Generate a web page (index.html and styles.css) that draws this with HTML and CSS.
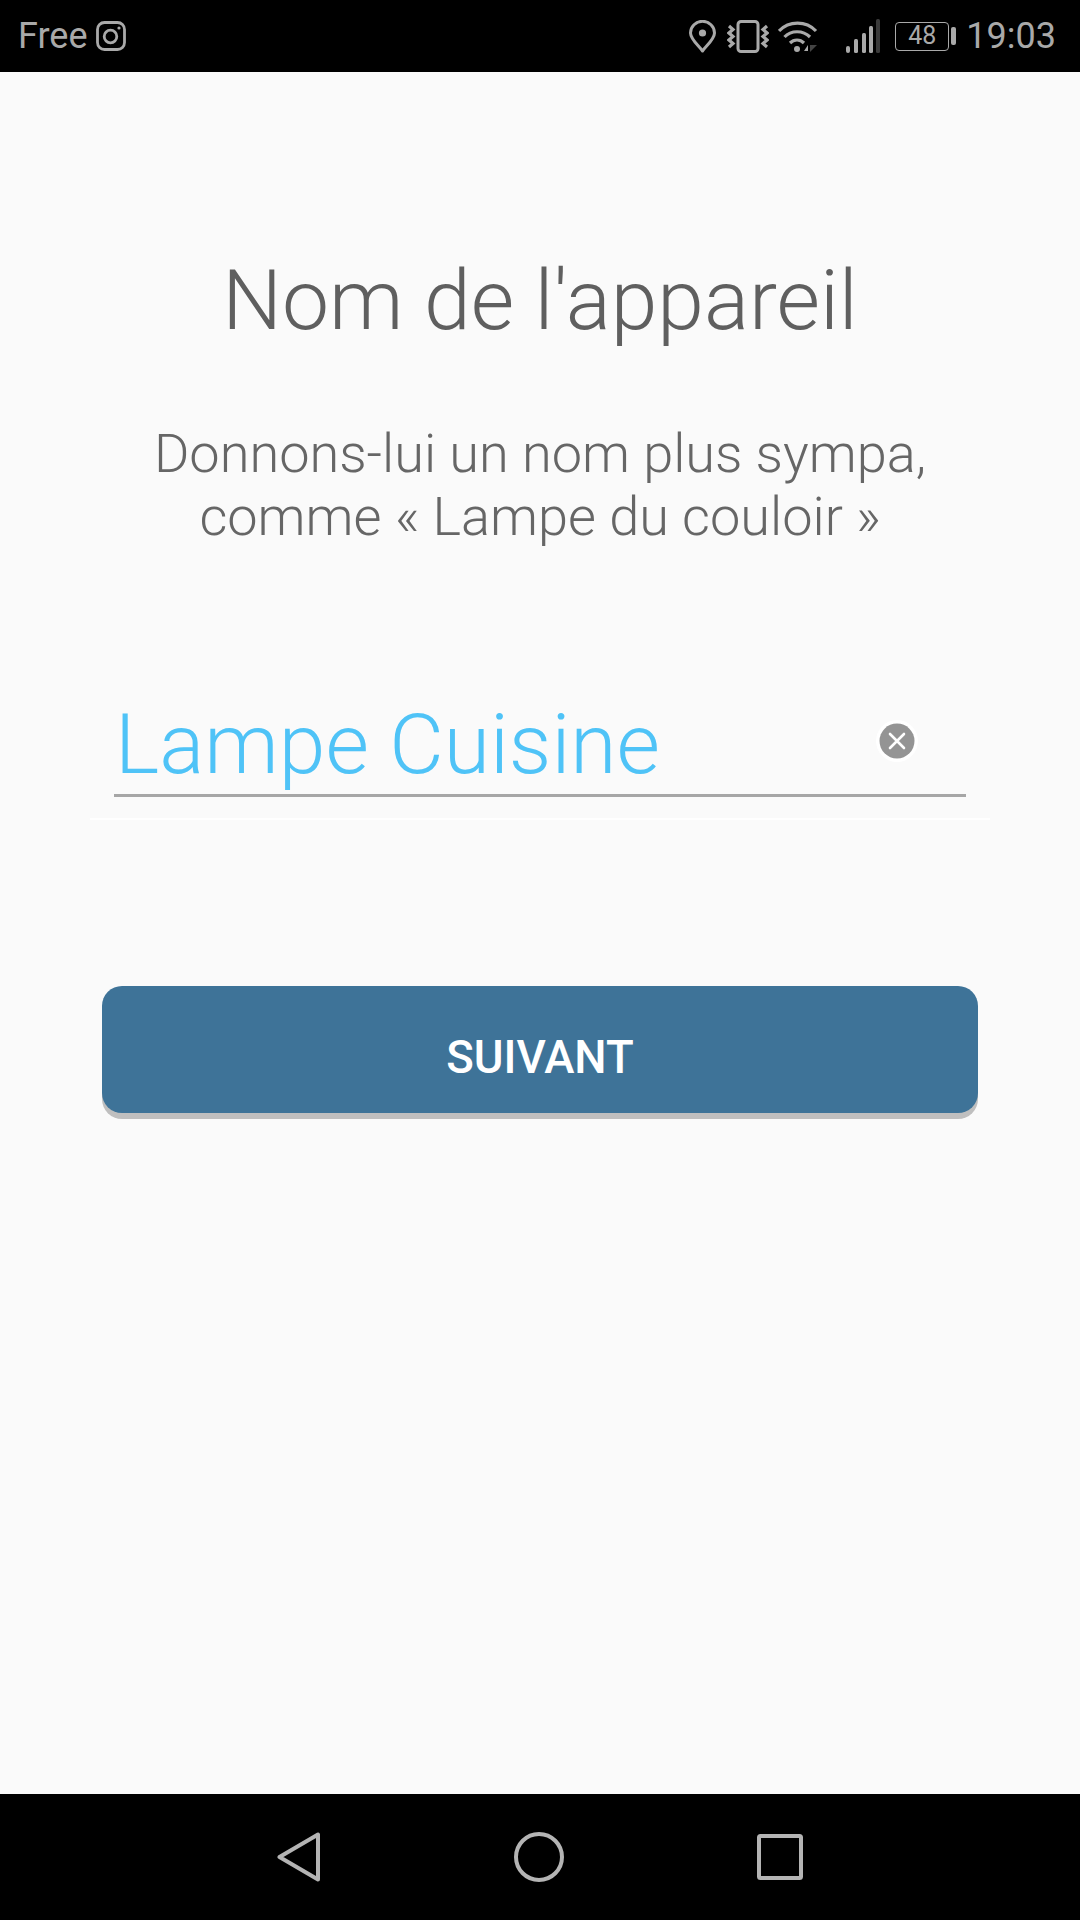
FILE: index.html
```html
<!DOCTYPE html>
<html lang="fr">
<head>
  <meta charset="UTF-8" />
  <meta name="viewport" content="width=device-width, initial-scale=1.0"/>
  <title>Nom de l'appareil</title>
  <link rel="stylesheet" href="styles.css">
</head>
<body>
  <div class="status-bar">
    <div class="status-left">
      <span>Free</span>
      <svg class="icon-insta" viewBox="0 0 30 30" fill="none" stroke="#a9a9a9" stroke-width="2.8">
        <rect x="1.5" y="1.5" width="27" height="27" rx="7"/>
        <circle cx="14.5" cy="15.5" r="6.3"/>
        <circle cx="23" cy="7" r="1.6" fill="#a9a9a9" stroke="none"/>
      </svg>
    </div>
    <div class="status-right">
      <svg class="icon-pin" viewBox="0 0 27 33" fill="none" stroke="#a9a9a9" stroke-width="3">
        <path d="M13.5 31 C9 25 1.5 19 1.5 13 A12 11.7 0 0 1 25.5 13 C25.5 19 18 25 13.5 31 Z" stroke-linejoin="round"/>
        <circle cx="13.5" cy="13" r="3.6" fill="#a9a9a9" stroke="none"/>
      </svg>
      <svg class="icon-vibrate" viewBox="0 0 42 33" fill="none" stroke="#a9a9a9">
        <rect x="11" y="1.5" width="20" height="30" rx="3" stroke-width="3"/>
        <path d="M2 6 L6 9.5 L2 13 L6 16.5 L2 20 L6 23.5 L2 27" stroke-width="3.2"/>
        <path d="M40 6 L36 9.5 L40 13 L36 16.5 L40 20 L36 23.5 L40 27" stroke-width="3.2"/>
      </svg>
      <svg class="icon-wifi" viewBox="0 0 40 33" fill="none" stroke="#a9a9a9" stroke-width="3.2">
        <path d="M1 11 C11 0.5 28 0.5 38 11"/>
        <path d="M6.5 17 C13 10 25 10 32 17"/>
        <path d="M12 23 C16 19 22 19 26 23"/>
        <circle cx="19" cy="29" r="3" fill="#a9a9a9" stroke="none"/>
        <path d="M30 31 H26 L30 25 Z" fill="#a9a9a9" stroke="none"/>
        <path d="M32 32 V25 L39 25 L32 32 Z" fill="#444" stroke="none"/>
      </svg>
      <svg class="icon-signal" viewBox="0 0 34 34">
        <rect x="0" y="27" width="4" height="7" rx="2" fill="#a9a9a9"/>
        <rect x="8" y="20" width="4" height="14" rx="1.5" fill="#a9a9a9"/>
        <rect x="16" y="14" width="4" height="20" rx="1.5" fill="#a9a9a9"/>
        <rect x="23" y="7" width="4" height="27" rx="1.5" fill="#a9a9a9"/>
        <rect x="30" y="0" width="4" height="34" rx="1.5" fill="#3a3a3a"/>
      </svg>
      <div class="battery">
        <div class="battery-body">48</div>
        <div class="battery-cap"></div>
      </div>
      <span class="clock">19:03</span>
    </div>
  </div>

  <div class="content">
    <h1 class="title">Nom de l'appareil</h1>
    <p class="subtitle">Donnons-lui un nom plus sympa,<br>comme « Lampe du couloir »</p>

    <div class="field">
      <div class="field-row">
        <span class="field-value">Lampe Cuisine</span>
        <svg class="icon-clear" viewBox="0 0 42 42">
          <circle cx="21" cy="21" r="21" fill="#fff"/>
          <circle cx="21" cy="21" r="17.5" fill="#949494"/>
          <path d="M14 14 L28 28 M28 14 L14 28" stroke="#fff" stroke-width="2.6" stroke-linecap="round"/>
        </svg>
      </div>
    </div>

    <button class="next-btn">SUIVANT</button>
  </div>

  <div class="nav-bar">
    <svg class="nav-back" viewBox="0 0 44 50" fill="none" stroke="#b4b4b4" stroke-width="4" stroke-linejoin="round">
      <path d="M41 2.5 V47.5 L2.5 25 Z"/>
    </svg>
    <svg class="nav-home" viewBox="0 0 50 50" fill="none" stroke="#b4b4b4" stroke-width="4">
      <circle cx="25" cy="25" r="23"/>
    </svg>
    <svg class="nav-recent" viewBox="0 0 46 46" fill="none" stroke="#b4b4b4" stroke-width="4" stroke-linejoin="round">
      <rect x="2" y="2" width="42" height="42" rx="1.5"/>
    </svg>
  </div>
</body>
</html>
```

FILE: styles.css
```css
* {
  box-sizing: border-box;
}

body {
  margin: 0;
  width: 1080px;
  height: 1920px;
  display: flex;
  flex-direction: column;
  background: #fafafa;
  font-family: Roboto, sans-serif;
}

/* status bar */
.status-bar {
  height: 72px;
  padding: 0 24px 0 18px;
  background: #000;
  color: #a9a9a9;
  font-size: 36px;
  display: flex;
  justify-content: space-between;
  align-items: center;
}

.status-left,
.status-right {
  display: flex;
  align-items: center;
}

.status-left {
  gap: 8px;
}

.icon-insta {
  width: 30px;
  height: 30px;
}

.icon-pin {
  width: 27px;
  height: 33px;
}

.icon-vibrate {
  width: 42px;
  height: 33px;
  margin-left: 11px;
}

.icon-wifi {
  width: 40px;
  height: 33px;
  margin-left: 9px;
}

.icon-signal {
  width: 34px;
  height: 34px;
  margin-left: 28px;
}

.battery {
  display: flex;
  align-items: center;
  gap: 2px;
  margin-left: 15px;
}

.battery-body {
  width: 54px;
  height: 29px;
  border: 1.5px solid #a9a9a9;
  border-radius: 4px;
  font-size: 25px;
  line-height: 26px;
  text-align: center;
}

.battery-cap {
  width: 5px;
  height: 18px;
  border-radius: 2px;
  background: #a9a9a9;
}

.clock {
  margin-left: 10px;
}

/* page content */
.content {
  flex: 1;
  padding-top: 179px;
  display: flex;
  flex-direction: column;
  align-items: center;
}

.title {
  margin: 0;
  font-size: 84px;
  font-weight: 300;
  line-height: 100px;
  color: #5f5f5f;
}

.subtitle {
  margin: 71px 0 0;
  font-size: 54.1px;
  font-weight: 300;
  line-height: 63px;
  color: #666;
  text-align: center;
}

.field {
  width: 900px;
  margin-top: 151px;
  padding: 0 24px 21px;
  border-bottom: 2px solid #fff;
}

.field-row {
  height: 98px;
  padding-right: 48px;
  padding-bottom: 11px;
  border-bottom: 3px solid #a6a6a6;
  display: flex;
  justify-content: space-between;
  align-items: center;
}

.field-value {
  margin-left: 1px;
  padding-top: 6px;
  font-size: 84px;
  font-weight: 300;
  color: #4fc3f7;
}

.icon-clear {
  width: 42px;
  height: 42px;
}

.next-btn {
  width: 876px;
  height: 127px;
  margin-top: 166px;
  padding: 16px 0 0;
  border: 0;
  border-radius: 20px;
  background: #3e7398;
  box-shadow: 0 6px 0 #bfbfbf;
  color: #fff;
  font-family: Roboto, sans-serif;
  font-size: 45.5px;
  font-weight: 500;
}

/* navigation bar */
.nav-bar {
  height: 126px;
  background: #000;
  display: flex;
  justify-content: center;
  align-items: center;
  gap: 193px;
}

.nav-back {
  width: 44px;
  height: 50px;
}

.nav-home {
  width: 50px;
  height: 50px;
}

.nav-recent {
  width: 46px;
  height: 46px;
}
```
